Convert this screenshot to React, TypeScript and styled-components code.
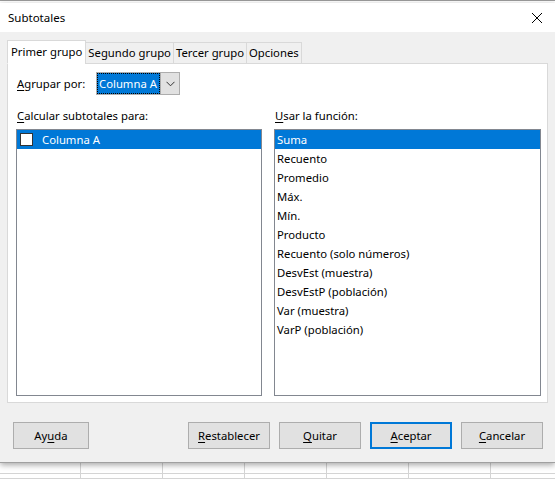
import React from "react";
import styled, { createGlobalStyle } from "styled-components";

const Global = createGlobalStyle`
  html, body { margin: 0; padding: 0; background: #ffffff; }
  body { font-family: "Noto Sans", "Segoe UI", sans-serif; font-size: 11.3px; color: #000; }
  * { box-sizing: border-box; }
`;

const Screen = styled.div`
  width: 555px;
  height: 479px;
  display: flex;
  flex-direction: column;
  overflow: hidden;
  background: #ffffff;
`;

const TopStrip = styled.div`
  height: 3px;
  flex: none;
  background: #ffffff;
  border-top: 1px solid #9a9a9a;
`;

const Dialog = styled.div`
  flex: none;
  display: flex;
  flex-direction: column;
  height: 460px;
  background: #f0f0f0;
  box-shadow: 0 2px 6px rgba(0, 0, 0, 0.35);
  position: relative;
  z-index: 1;
  border-bottom: 1px solid #a0a0a0;
`;

const TitleBar = styled.div`
  height: 29px;
  flex: none;
  background: #ffffff;
  display: flex;
  align-items: center;
  justify-content: space-between;
  padding: 0 6px 0 8px;
`;

const Title = styled.span`
  font-size: 11.5px;
  line-height: 16px;
`;

const CloseBtn = styled.div`
  width: 24px;
  height: 24px;
  display: flex;
  align-items: center;
  justify-content: center;
`;

const Body = styled.div`
  flex: 1;
  display: flex;
  flex-direction: column;
  padding: 8px 7px 0 7px;
`;

const TabStrip = styled.div`
  display: flex;
  align-items: flex-end;
  height: 24px;
  position: relative;
  z-index: 2;
  margin-bottom: -1px;
`;

const Tab = styled.div<{ $active?: boolean }>`
  height: ${(p) => (p.$active ? "24px" : "22px")};
  padding: 0 ${(p) => (p.$active ? "3px" : "2px")};
  display: flex;
  align-items: center;
  justify-content: center;
  background: ${(p) => (p.$active ? "#ffffff" : "#f0f0f0")};
  border: 1px solid #d9d9d9;
  border-bottom: ${(p) => (p.$active ? "1px solid #ffffff" : "1px solid #d9d9d9")};
  margin-left: ${(p) => (p.$active ? "0" : "-1px")};
  white-space: nowrap;
  line-height: 16px;
`;

const Panel = styled.div`
  width: 541px;
  height: 340px;
  background: #ffffff;
  border: 1px solid #d9d9d9;
  display: flex;
  flex-direction: column;
  padding: 8px 0 0 8px;
`;

const GroupRow = styled.div`
  display: flex;
  align-items: center;
  height: 23px;
  margin-bottom: 13px;
`;

const Label = styled.span`
  line-height: 16px;
  white-space: nowrap;
`;

const GroupLabel = styled(Label)`
  width: 80px;
  padding-left: 1px;
`;

const Combo = styled.div`
  width: 84px;
  height: 23px;
  display: flex;
  border: 1px solid #adadad;
  background: #e1e1e1;
`;

const ComboValue = styled.div`
  flex: 1;
  background: #0078d7;
  color: #ffffff;
  display: flex;
  align-items: center;
  padding-left: 1px;
  border: 1px dotted #000000;
  line-height: 16px;
  white-space: nowrap;
`;

const ComboArrow = styled.div`
  width: 19px;
  display: flex;
  align-items: center;
  justify-content: center;
  border-left: 1px solid #adadad;
`;

const Columns = styled.div`
  display: grid;
  grid-template-columns: 246px 267px;
  column-gap: 12px;
`;

const Column = styled.div`
  display: flex;
  flex-direction: column;
`;

const ColLabel = styled(Label)`
  height: 16px;
  margin-bottom: 5px;
  padding-left: 1px;
`;

const ListBox = styled.div`
  height: 267px;
  border: 1px solid #828790;
  background: #ffffff;
  padding: 0;
  overflow: hidden;
`;

const Row = styled.div<{ $selected?: boolean }>`
  height: 19px;
  display: flex;
  align-items: center;
  gap: 9px;
  padding-left: 2px;
  background: ${(p) => (p.$selected ? "#0078d7" : "transparent")};
  color: ${(p) => (p.$selected ? "#ffffff" : "#000000")};
  line-height: 16px;
  white-space: nowrap;
`;

const CheckBox = styled.span`
  width: 13px;
  height: 13px;
  margin-left: 1px;
  background: #ffffff;
  border: 1px solid #333333;
  flex: none;
`;

const ButtonBar = styled.div`
  display: flex;
  align-items: center;
  padding: 19px 5px 0 6px;
  gap: 9px;
`;

const Spacer = styled.div`
  flex: 1;
`;

const Button = styled.div<{ $default?: boolean; $w?: number }>`
  width: ${(p) => p.$w ?? 82}px;
  height: 27px;
  display: flex;
  align-items: center;
  justify-content: center;
  background: #e1e1e1;
  border: ${(p) => (p.$default ? "2px solid #0078d7" : "1px solid #adadad")};
  line-height: 16px;
  white-space: nowrap;
`;

const U = styled.span`
  text-decoration: underline;
  text-underline-offset: 2px;
`;

const Sheet = styled.div`
  flex: 1;
  display: grid;
  grid-template-columns: repeat(7, 82px);
  grid-template-rows: 11px 1fr;
  margin-left: -1px;
`;

const Cell = styled.div`
  border-right: 1px solid #d4d4d4;
  border-bottom: 1px solid #d4d4d4;
`;

const functions = [
  "Suma",
  "Recuento",
  "Promedio",
  "Máx.",
  "Mín.",
  "Producto",
  "Recuento (solo números)",
  "DesvEst (muestra)",
  "DesvEstP (población)",
  "Var (muestra)",
  "VarP (población)",
];

export default function App() {
  return (
    <Screen>
      <Global />
      <TopStrip />
      <Dialog>
        <TitleBar>
          <Title>Subtotales</Title>
          <CloseBtn>
            <svg width="12" height="12" viewBox="0 0 12 12">
              <path d="M1 1 L11 11 M11 1 L1 11" stroke="#000" strokeWidth="1" fill="none" />
            </svg>
          </CloseBtn>
        </TitleBar>
        <Body>
          <TabStrip>
            <Tab $active>Primer grupo</Tab>
            <Tab>Segundo grupo</Tab>
            <Tab>Tercer grupo</Tab>
            <Tab>Opciones</Tab>
          </TabStrip>
          <Panel>
            <GroupRow>
              <GroupLabel>
                <U>A</U>grupar por:
              </GroupLabel>
              <Combo>
                <ComboValue>Columna A</ComboValue>
                <ComboArrow>
                  <svg width="9" height="6" viewBox="0 0 9 6">
                    <path d="M0.5 0.8 L4.5 4.8 L8.5 0.8" stroke="#333" strokeWidth="1" fill="none" />
                  </svg>
                </ComboArrow>
              </Combo>
            </GroupRow>
            <Columns>
              <Column>
                <ColLabel>
                  <U>C</U>alcular subtotales para:
                </ColLabel>
                <ListBox>
                  <Row $selected>
                    <CheckBox />
                    Columna A
                  </Row>
                </ListBox>
              </Column>
              <Column>
                <ColLabel>
                  <U>U</U>sar la función:
                </ColLabel>
                <ListBox>
                  {functions.map((f, i) => (
                    <Row key={f} $selected={i === 0}>
                      {f}
                    </Row>
                  ))}
                </ListBox>
              </Column>
            </Columns>
          </Panel>
          <ButtonBar>
            <Button $w={76}>
              Ay<U>u</U>da
            </Button>
            <Spacer />
            <Button>
              <U>R</U>establecer
            </Button>
            <Button>
              <U>Q</U>uitar
            </Button>
            <Button $default>
              <U>A</U>ceptar
            </Button>
            <Button>
              <U>C</U>ancelar
            </Button>
          </ButtonBar>
        </Body>
      </Dialog>
      <Sheet>
        {Array.from({ length: 14 }).map((_, i) => (
          <Cell key={i} />
        ))}
      </Sheet>
    </Screen>
  );
}
